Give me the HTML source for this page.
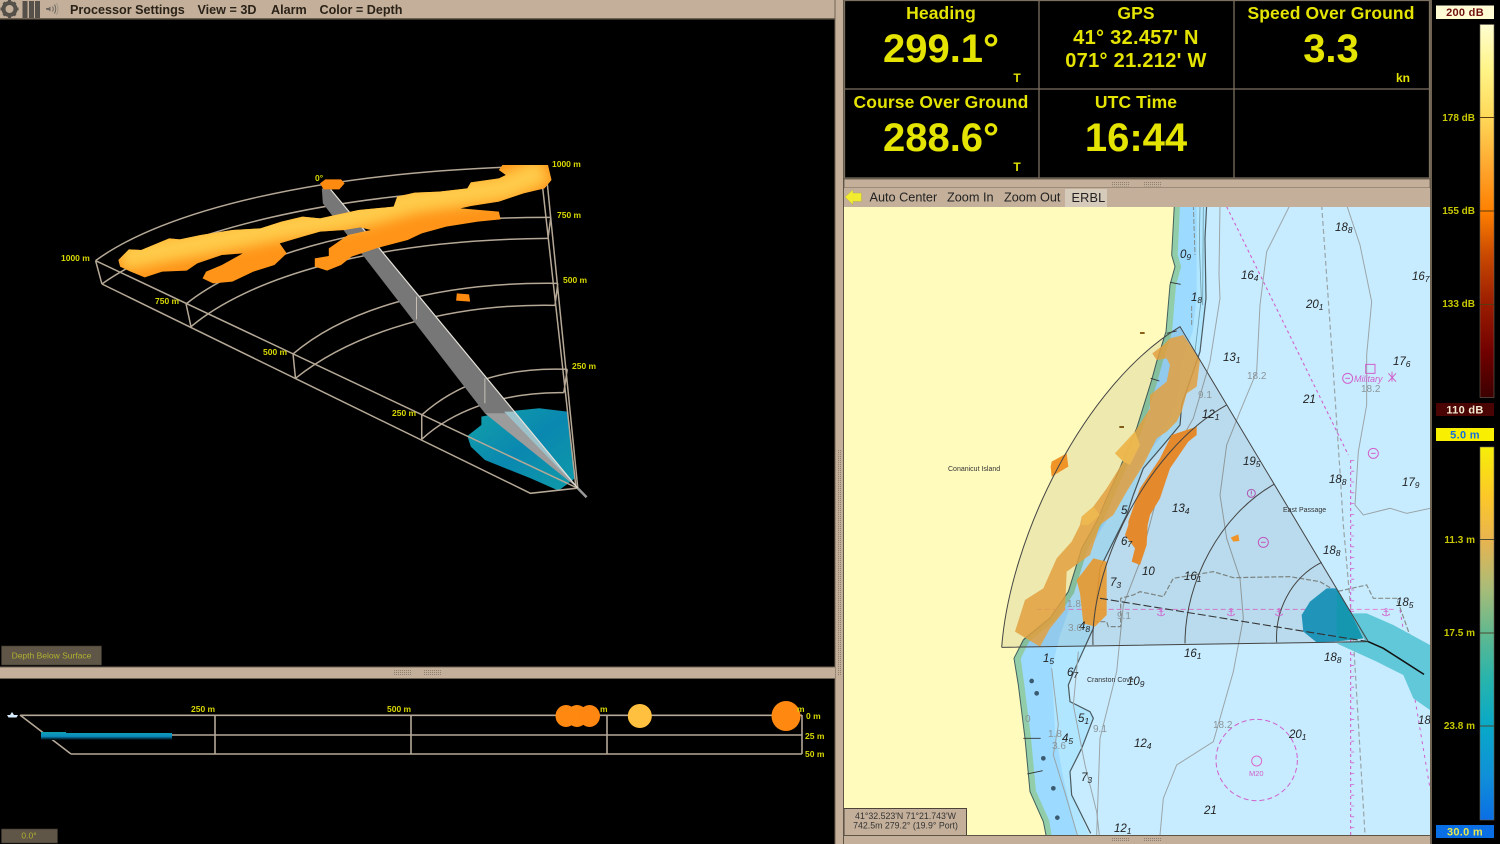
<!DOCTYPE html>
<html><head><meta charset="utf-8"><title>Sonar</title>
<style>
html,body{margin:0;padding:0;background:#000;width:1500px;height:844px;overflow:hidden}
svg{position:absolute;left:0;top:0;display:block;filter:blur(.25px)}
text{font-family:"Liberation Sans",sans-serif}
.y{fill:#e4e400;font-weight:bold;text-anchor:middle}
.h{font-size:17.500px;letter-spacing:.1px}
.b{font-size:40px}
.g{font-size:20px;letter-spacing:.3px}
.u{font-size:12px}
.m{font-size:12.700px;fill:#222}
.t{font-size:12.600px;font-weight:bold;fill:#2a2218}
.l{font-size:8.500px;font-weight:bold;fill:#d8d800}
.s{font-size:10px;font-weight:bold;fill:#c8c800;text-anchor:end}
.bx{font-size:11px;font-weight:bold;text-anchor:middle;letter-spacing:.3px}
.n{font-size:11.500px;font-style:italic;fill:#222}
.n tspan{font-size:8.500px}
.gr{font-size:10px;fill:#8a9498}
.nm{font-size:7px;fill:#333}
.fr{fill:none;stroke:#b5a896;stroke-width:1.500;vector-effect:non-scaling-stroke}
.ln{fill:none;vector-effect:non-scaling-stroke}
</style></head><body>
<svg width="1500" height="844" viewBox="0 0 1500 844" xmlns="http://www.w3.org/2000/svg">
<defs>
<clipPath id="mc"><rect x="844" y="207" width="586" height="628"/></clipPath>
<filter id="bl" x="-20%" y="-40%" width="140%" height="180%"><feGaussianBlur stdDeviation="18"/></filter>
<clipPath id="blob"><path d="M195,330L225,298L260,300L340,265L370,268L430,255L520,240L600,235L660,215L720,200L770,205L880,180L980,170L990,140L1040,128L1110,125L1190,115L1200,97L1280,85L1300,75L1280,60L1290,45L1420,45L1430,90L1410,115L1350,130L1280,155L1200,168L1170,175L1280,185L1285,208L1220,215L1130,230L1060,250L1020,270L930,295L860,320L830,345L790,362L755,350L755,325L795,318L795,295L850,255L915,240L885,232L840,240L770,245L720,260L655,280L675,310L640,345L580,365L520,395L465,400L435,385L445,365L490,345L550,310L490,315L420,340L390,362L320,365L270,382L230,365L200,350Z"/></clipPath>
<linearGradient id="g1" x1="0" y1="0" x2="0" y2="1"><stop offset="0" stop-color="#fffdd0"/><stop offset=".12" stop-color="#fff488"/><stop offset=".25" stop-color="#ffd858"/><stop offset=".4" stop-color="#ffa028"/><stop offset=".5" stop-color="#ff8000"/><stop offset=".62" stop-color="#c84800"/><stop offset=".75" stop-color="#9a1c00"/><stop offset=".88" stop-color="#700000"/><stop offset="1" stop-color="#3c0000"/></linearGradient>
<linearGradient id="g2" x1="0" y1="0" x2="0" y2="1"><stop offset="0" stop-color="#f6ee08"/><stop offset=".13" stop-color="#fcc828"/><stop offset=".25" stop-color="#e8b450"/><stop offset=".38" stop-color="#a8bc78"/><stop offset=".5" stop-color="#60b890"/><stop offset=".62" stop-color="#28b4ac"/><stop offset=".75" stop-color="#08a8c8"/><stop offset=".88" stop-color="#1090d8"/><stop offset="1" stop-color="#0a6ee4"/></linearGradient>
<linearGradient id="tb" x1="0" y1="0" x2="0" y2="1"><stop offset="0" stop-color="#10a0b0"/><stop offset=".55" stop-color="#0a8cc0"/><stop offset="1" stop-color="#000"/></linearGradient>
<linearGradient id="bb" x1="0" y1="0" x2="1" y2="1"><stop offset="0" stop-color="#12a0a8"/><stop offset=".5" stop-color="#0a88b0"/><stop offset="1" stop-color="#0f9aa8"/></linearGradient>
<pattern id="dots" width="2" height="2" patternUnits="userSpaceOnUse"><rect width="1" height="1" fill="#8d8070"/></pattern>
</defs>

<!-- frame -->
<rect width="1500" height="844" fill="#000"/>
<rect x="0" y="0" width="835" height="19" fill="#c4b09a"/>
<rect x="0" y="18" width="835" height="1.500" fill="#6e6252"/>
<rect x="835" y="0" width="9" height="844" fill="#c4b09a"/>
<rect x="843" y="0" width="1" height="844" fill="#5e5446"/>
<rect x="834.500" y="0" width="1" height="844" fill="#6e6252"/>
<rect x="838" y="450" width="3" height="225" fill="url(#dots)"/>
<rect x="0" y="667" width="835" height="12" fill="#c4b09a"/>
<rect x="0" y="666.500" width="835" height="1" fill="#6e6252"/>
<rect x="0" y="678" width="835" height="1" fill="#6e6252"/>
<rect x="393" y="670" width="18" height="5" fill="url(#dots)"/><rect x="424" y="670" width="18" height="5" fill="url(#dots)"/>
<rect x="1430" y="0" width="2" height="844" fill="#6e6252"/>

<!-- menu bar -->
<g fill="#55504a">
<circle cx="9.500" cy="9" r="6" fill="none" stroke="#55504a" stroke-width="4"/>
<path d="M8,0h3v3h-3zM8,15h3v3h-3zM0.500,7.500h3v3h-3zM15.500,7.500h3v3h-3zM2.500,3.500l2,-2l2.500,2.500l-2,2zM12,14l2,-2l2.500,2.500l-2,2zM2.500,14.500l2.500,-2.500l2,2l-2.500,2.500zM12,4l2.500,-2.500l2,2l-2.500,2.500z"/>
<rect x="22.500" y="1" width="5" height="17"/><rect x="29" y="1" width="5" height="17"/><rect x="35" y="1" width="5" height="17"/>
<path d="M46,8h2.500l2,-1.500v5l-2,-1.500h-2z" fill="#6a655e"/>
<path d="M52.500,6.500q1.500,2.500 0,5M54.500,4.500q2.500,4.500 0,9" fill="none" stroke="#6a655e" stroke-width="1"/>
<path d="M56.500,3q3,6 0,12" fill="none" stroke="#9a9084" stroke-width=".8"/>
</g>
<text x="70" y="14" class="t">Processor Settings</text>
<text x="197.500" y="14" class="t">View = 3D</text>
<text x="271" y="14" class="t">Alarm</text>
<text x="319.500" y="14" class="t">Color = Depth</text>

<!-- 3D view -->
<g transform="translate(50,150) scale(.3507,.3333)">
<path d="M1230,800L1300,785L1395,775L1475,785L1480,830L1497,985L1450,1022L1370,985L1240,930L1200,890L1190,858L1230,825Z" fill="url(#bb)"/>
<path class="fr" d="M130,332C320,185 760,62 1413,48"/>
<path class="fr" d="M148,402C350,250 800,120 1405,115"/>
<path class="fr" d="M388,462C520,350 850,200 1428,202"/>
<path class="fr" d="M402,530C560,390 900,270 1420,265"/>
<path class="fr" d="M693,612C840,480 1100,395 1448,400"/>
<path class="fr" d="M700,685C860,550 1130,460 1440,466"/>
<path class="fr" d="M1060,795C1150,710 1280,650 1475,658"/>
<path class="fr" d="M1060,868C1140,790 1280,725 1465,728"/>
<path class="fr" d="M130,332L1505,1015L1413,48M148,402L1370,1030L1500,1015L1405,115M130,332L148,402M388,462L402,530M693,612L700,685M1060,795L1060,868M1475,658L1465,728M1448,400L1440,466M1428,202L1420,265M1413,48L1405,115"/>
<path d="M775,115L800,118L1505,1015L1240,790L778,160Z" fill="#777"/>
<path d="M1295,785L1325,785L1505,1015Z" fill="#a8dce8" opacity=".75"/>
<path d="M1240,790L1300,790L1505,1015Z" fill="#fff" opacity=".28"/>
<path class="ln" d="M800,118L1505,1015" stroke="#e6e2da" stroke-width="1.200"/>
<path class="ln" d="M1045,440V508M1240,685V760" stroke="#c8c0b4" stroke-width="1"/>
<path d="M195,330L225,298L260,300L340,265L370,268L430,255L520,240L600,235L660,215L720,200L770,205L880,180L980,170L990,140L1040,128L1110,125L1190,115L1200,97L1280,85L1300,75L1280,60L1290,45L1420,45L1430,90L1410,115L1350,130L1280,155L1200,168L1170,175L1280,185L1285,208L1220,215L1130,230L1060,250L1020,270L930,295L860,320L830,345L790,362L755,350L755,325L795,318L795,295L850,255L915,240L885,232L840,240L770,245L720,260L655,280L675,310L640,345L580,365L520,395L465,400L435,385L445,365L490,345L550,310L490,315L420,340L390,362L320,365L270,382L230,365L200,350Z" fill="#ff9418"/>
<g clip-path="url(#blob)"><path d="M200,325L340,295L480,268L640,235L770,215L900,190L1040,150L1180,130L1300,110L1410,60" fill="none" stroke="#ffca48" stroke-width="78" filter="url(#bl)"/></g>
<path d="M770,100L785,88L830,88L840,100L825,118L780,118Z" fill="#ff8a10"/>
<path d="M1160,430L1195,433L1198,455L1158,452Z" fill="#ff8a10"/>
<path class="ln" d="M1505,1015L1530,1042" stroke="#999" stroke-width="2.500"/>
</g>
<g class="l">
<text x="61" y="261">1000 m</text><text x="315" y="181">0°</text><text x="552" y="167">1000 m</text>
<text x="557" y="218">750 m</text><text x="563" y="283">500 m</text><text x="572" y="369">250 m</text>
<text x="155" y="304">750 m</text><text x="263" y="355">500 m</text><text x="392" y="416">250 m</text>
</g>
<rect x="1.500" y="646" width="100" height="19" fill="#5f5648" stroke="#3a342a" stroke-width=".6"/>
<text x="51.500" y="658.500" font-size="8.500" fill="#b0b030" text-anchor="middle">Depth Below Surface</text>

<!-- profile -->
<path d="M20,715.300H802M43,735H802M71,754H802M215,715V754M411,715V754M607,715V754M802,715V754M20,715L71,754" fill="none" stroke="#b5a898" stroke-width="1.600"/>
<path d="M7,715h11l-1.500,2.500h-8zM10,715l2,-3l2,3z" fill="#d8ecff"/>
<path d="M41,732H66V733H172V740H41Z" fill="url(#tb)"/>
<ellipse cx="566" cy="716" rx="10.500" ry="11" fill="#ff8810"/><ellipse cx="577" cy="716" rx="10.500" ry="11" fill="#ff8810"/><ellipse cx="589.500" cy="716" rx="10.500" ry="11" fill="#ff8610"/>
<ellipse cx="639.800" cy="716" rx="12" ry="12" fill="#ffc040"/>
<ellipse cx="786" cy="716" rx="14.500" ry="15" fill="#ff8810"/>
<g class="l">
<text x="191" y="712">250 m</text><text x="387" y="712">500 m</text><text x="600" y="712">m</text><text x="797" y="712">m</text>
<text x="806" y="719">0 m</text><text x="805" y="739">25 m</text><text x="805" y="757">50 m</text>
</g>
<rect x="1.500" y="829" width="56" height="14" fill="#5f5648" stroke="#3a342a" stroke-width=".6"/>
<text x="29" y="838.500" font-size="8.500" fill="#b0b030" text-anchor="middle">0.0°</text>

<!-- instruments -->
<path d="M844.500,0V179M1039,0V178M1234,0V178M1429.500,0V179M844,0.500H1430M844,89H1430M844,178H1430" stroke="#7c7060" stroke-width="1.300" fill="none"/>
<text x="941" y="19" class="y h">Heading</text><text x="941" y="62" class="y b">299.1°</text><text x="1017" y="82" class="y u">T</text>
<text x="1136" y="19" class="y h">GPS</text><text x="1136" y="44" class="y g">41° 32.457' N</text><text x="1136" y="67" class="y g">071° 21.212' W</text>
<text x="1331" y="19" class="y h">Speed Over Ground</text><text x="1331" y="62" class="y b">3.3</text><text x="1403" y="82" class="y u">kn</text>
<text x="941" y="108" class="y h">Course Over Ground</text><text x="941" y="151" class="y b">288.6°</text><text x="1017" y="171" class="y u">T</text>
<text x="1136" y="108" class="y h">UTC Time</text><text x="1136" y="151" class="y b">16:44</text>
<rect x="844" y="179" width="586" height="9" fill="#c4b09a" stroke="#5e5446" stroke-width=".8"/>
<rect x="1112" y="181.500" width="18" height="5" fill="url(#dots)"/><rect x="1144" y="181.500" width="18" height="5" fill="url(#dots)"/>

<!-- toolbar -->
<rect x="844" y="188" width="586" height="19" fill="#c4b09a"/>
<path d="M845,197L853,189.500V193H861.500V201.500H853V205Z" fill="#f2ec30" stroke="#b0a858" stroke-width=".5"/>
<text x="869.500" y="201.500" class="m">Auto Center</text><text x="947" y="201.500" class="m">Zoom In</text><text x="1004" y="201.500" class="m">Zoom Out</text>
<rect x="1065" y="189" width="42" height="18" fill="#d6cabb"/>
<text x="1071.500" y="202" class="m" style="letter-spacing:.2px">ERBL</text>

<!-- map -->
<g clip-path="url(#mc)">
<rect x="844" y="207" width="586" height="628" fill="#fffbbd"/>
<g transform="translate(1000,205) scale(.33333)">
<path d="M523,0L515,150L525,185L510,240L498,380L470,470L455,525L410,670L355,800L320,880L290,950L245,1030L205,1160L150,1240L70,1305L42,1360L55,1440L75,1600L90,1760L130,1850L140,1900H1290V0Z" fill="#c8ecff"/>
<path d="M523,0L515,150L525,185L510,240L498,380L470,470L455,525L410,670L355,800L320,880L290,950L245,1030L205,1160L150,1240L70,1305L42,1360L55,1440L75,1600L90,1760L130,1850L140,1900H272L215,1770L210,1700L245,1630L280,1540L270,1520L210,1490L205,1440L230,1380L280,1270L300,1090L350,990L380,930L400,870L430,790L490,720L540,660L545,600L600,440L618,280L615,100L620,0Z" fill="#b0e6ff"/>
<path d="M523,0L515,150L525,185L510,240L498,380L470,470L455,525L410,670L355,800L320,880L290,950L245,1030L205,1160L150,1240L70,1305L42,1360L55,1440L75,1600L90,1760L130,1850L140,1900H232L190,1720L165,1580L155,1390L180,1290L205,1220L215,1140L270,1030L330,930L380,850L430,760L480,700L530,600L545,470L578,380L590,280L590,0Z" fill="#9cdaff"/>
<path class="ln" d="M531,0L524,150L534,185L519,240L507,380L479,470L464,525L419,670L364,800L329,880L299,950L254,1030L214,1160L159,1240L79,1305L53,1360L64,1440L84,1600L99,1760L139,1850L147,1900" stroke="#90cda8" stroke-width="6"/>
<path class="ln" d="M523,0L515,150L525,185L510,240L498,380L470,470L455,525L410,670L355,800L320,880L290,950L245,1030L205,1160L150,1240L70,1305L42,1360L55,1440L75,1600L90,1760L130,1850L140,1900" stroke="#44605a" stroke-width="1"/>
<path class="ln" d="M620,0L615,100L618,280L600,440L545,600L540,660L490,720L430,790L400,870L380,930L350,990L300,1090L280,1270L230,1380L205,1440L210,1490L270,1520L280,1540L245,1630L210,1700L215,1770L272,1885" stroke="#4a5a60" stroke-width="1.200"/>
<path class="ln" d="M600,0L598,120L604,280L585,440M610,0L608,300" stroke="#6f9ba8" stroke-width=".8"/>
<path class="ln" d="M510,232L542,238M500,385L530,378M452,520L478,528M70,1600H122M82,1707L128,1697" stroke="#333" stroke-width=".9"/>
<g fill="none" stroke="#9aa5a8" stroke-width="1">
<path class="ln" d="M660,0L657,210L660,280L630,470L580,640L540,710L470,880L420,1070L370,1200L350,1400L300,1600L290,1890"/>
<path class="ln" d="M870,0L800,140L780,300L770,500L720,620L680,720L660,870L680,1000L720,1120L730,1240L700,1400L640,1610L530,1680L490,1780L480,1890"/>
<path class="ln" d="M1040,0L1080,120L1115,290L1100,450L1100,600L1075,740L1065,900L1090,930L1170,910L1220,925L1290,910"/>
<path class="ln" d="M155,1390L175,1560L160,1650L200,1780L232,1890M235,1340L220,1500L255,1680L290,1820L298,1890"/>
</g>
<path class="ln" d="M965,0L1000,500L1020,800L1030,960L1060,1300L1095,1890" stroke="#98a4a6" stroke-width="1.200" stroke-dasharray="5 3"/>
<path class="ln" d="M280,1250H320L325,1265H362V1180L400,1170L420,1160L490,1175L520,1120L640,1100L700,1118L870,1115L960,1130L1010,1160L1100,1140L1120,1180L1190,1180L1240,1320L1280,1350" stroke="#858f8c" stroke-width="1.200" stroke-dasharray="5 2"/>
<path class="ln" d="M580,0L585,150M575,360V300" stroke="#858f8c" stroke-width="1" stroke-dasharray="5 2"/>
<path class="ln" d="M680,5L1045,750M1052,765V1890" stroke="#d060d0" stroke-width="1.100" stroke-dasharray="3 3"/>
<path class="ln" d="M1058,765V1890" stroke="#d060d0" stroke-width="3" stroke-dasharray=".8 10"/>
<path class="ln" d="M1200,1215L1290,1750" stroke="#d060d0" stroke-width="1" stroke-dasharray="3 4"/>
<path class="ln" d="M110,1213H1190" stroke="#e080d8" stroke-width="1" stroke-dasharray="5 3"/>
<circle cx="770" cy="1665" r="122" fill="none" stroke="#d060d0" stroke-width="1" stroke-dasharray="5 3" vector-effect="non-scaling-stroke"/>
<circle cx="770" cy="1668" r="15" fill="none" stroke="#d86cd0" stroke-width="1" vector-effect="non-scaling-stroke"/>
<circle cx="1120" cy="745" r="15" fill="none" stroke="#d060cc" stroke-width="1" vector-effect="non-scaling-stroke"/><path d="M1113,745H1127" stroke="#d060cc" stroke-width="3"/>
<circle cx="790" cy="1012" r="15" fill="none" stroke="#d060cc" stroke-width="1" vector-effect="non-scaling-stroke"/><path d="M783,1012H797" stroke="#d060cc" stroke-width="3"/>
<circle cx="1043" cy="520" r="15" fill="none" stroke="#d060cc" stroke-width="1" vector-effect="non-scaling-stroke"/><path d="M1036,520H1050" stroke="#d060cc" stroke-width="3"/>
<circle cx="754" cy="865" r="12" fill="none" stroke="#c060c0" stroke-width="1" vector-effect="non-scaling-stroke"/><path d="M754,857V868M754,871V873" stroke="#c060c0" stroke-width="3"/>
<rect x="1097" y="478" width="28" height="27" fill="none" stroke="#d060cc" stroke-width="1" vector-effect="non-scaling-stroke"/>
<path class="ln" d="M1165,505L1188,530M1188,505L1165,530M1176,500V530" stroke="#d060cc" stroke-width="1"/>
<g fill="#3a5a70"><circle cx="95" cy="1428" r="7"/><circle cx="110" cy="1465" r="7"/><circle cx="130" cy="1660" r="7"/><circle cx="160" cy="1750" r="7"/><circle cx="172" cy="1838" r="7"/></g>
<path d="M420,381h14v6h-14zM358,663h14v6h-14z" fill="#8a6418"/>
<!-- trail and echoes -->
<path d="M1050,1225L1100,1225L1180,1260L1290,1320V1515L1240,1480L1210,1410L1130,1370L1010,1315L1095,1305Z" fill="#60c8d8"/>
<!-- fan -->
<path d="M5,1327C30,1000 250,540 540,365L1105,1310Z" fill="#000" opacity=".07"/>
<path d="M457,445L490,420L510,400L550,390L600,465L590,545L560,565L545,620L530,650L500,680L470,700L430,780L380,860L340,930L300,960L270,1050L200,1100L195,1215L150,1270L120,1325L45,1280L75,1185L130,1150L170,1060L215,1010L240,960L245,935L280,905L320,850L370,770L345,745L405,680L450,610L450,570L500,530L510,480L500,460L470,465Z" fill="#e2a040" opacity=".85"/>
<path d="M345,745L405,680L420,720L390,780L370,770Z M245,935L280,905L300,930L265,960L245,960Z" fill="#f0bc50" opacity=".8"/>
<path d="M590,665L590,690L565,710L510,790L480,880L450,930L443,960L440,1020L420,1080L395,1070L405,1030L375,990L385,960L385,950L420,850L480,760L515,690Z" fill="#e58a2c"/>
<path d="M250,1100L280,1060L320,1070L320,1230L285,1265L250,1255L240,1165L230,1125Z" fill="#e8982c" opacity=".9"/>
<path d="M152,785L155,770L200,745L205,785L155,815Z" fill="#f09428"/>
<path d="M692,998L715,988L718,1008L700,1010Z" fill="#f09428"/>
<path d="M905,1230L930,1190L980,1150L1010,1150L1050,1220L1090,1300L1000,1310L950,1312L910,1280Z" fill="#2194ba"/>
<path d="M1010,1150L1050,1220L1090,1300L1010,1310Z" fill="#0e9aa8" opacity=".6"/>
<g fill="none" stroke="#444" stroke-width="1">
<path class="ln" d="M5,1327C30,1000 250,540 540,365L1105,1310L5,1327"/>
<path class="ln" d="M279,1320C270,1100 430,740 680,600"/>
<path class="ln" d="M555,1315C555,1130 660,930 822,838"/>
<path class="ln" d="M830,1312C825,1220 870,1120 965,1072"/>
</g>
<path class="ln" d="M300,1180L1105,1310" stroke="#333" stroke-width="1.100" stroke-dasharray="8 3"/>
<path class="ln" d="M1105,1310L1150,1330L1272,1408" stroke="#111" stroke-width="1.500"/>
</g>
<!-- soundings -->
<g class="n">
<text x="1180" y="258">0<tspan dy="2">9</tspan></text><text x="1191" y="301">1<tspan dy="2">8</tspan></text>
<text x="1241" y="279">16<tspan dy="2">4</tspan></text><text x="1335" y="231">18<tspan dy="2">8</tspan></text>
<text x="1412" y="280">16<tspan dy="2">7</tspan></text><text x="1306" y="308">20<tspan dy="2">1</tspan></text>
<text x="1223" y="361">13<tspan dy="2">1</tspan></text><text x="1393" y="365">17<tspan dy="2">6</tspan></text>
<text x="1303" y="403">21</text><text x="1202" y="418">12<tspan dy="2">1</tspan></text>
<text x="1243" y="465">19<tspan dy="2">5</tspan></text><text x="1172" y="512">13<tspan dy="2">4</tspan></text>
<text x="1329" y="483">18<tspan dy="2">8</tspan></text><text x="1402" y="486">17<tspan dy="2">9</tspan></text>
<text x="1323" y="554">18<tspan dy="2">8</tspan></text><text x="1142" y="575">10</text>
<text x="1184" y="580">16<tspan dy="2">1</tspan></text><text x="1110" y="586">7<tspan dy="2">3</tspan></text>
<text x="1396" y="606">18<tspan dy="2">5</tspan></text>
<text x="1324" y="661">18<tspan dy="2">8</tspan></text><text x="1184" y="657">16<tspan dy="2">1</tspan></text>
<text x="1043" y="662">1<tspan dy="2">5</tspan></text><text x="1067" y="676">6<tspan dy="2">7</tspan></text>
<text x="1127" y="685">10<tspan dy="2">9</tspan></text><text x="1078" y="722">5<tspan dy="2">1</tspan></text>
<text x="1062" y="742">4<tspan dy="2">5</tspan></text><text x="1134" y="747">12<tspan dy="2">4</tspan></text>
<text x="1289" y="738">20<tspan dy="2">1</tspan></text><text x="1081" y="781">7<tspan dy="2">3</tspan></text>
<text x="1204" y="814">21</text><text x="1114" y="832">12<tspan dy="2">1</tspan></text>
<text x="1079" y="630">4<tspan dy="2">8</tspan></text><text x="1418" y="724">18</text>
<text x="1121" y="514">5</text><text x="1121" y="545">6<tspan dy="2">7</tspan></text>
</g>
<g class="gr">
<text x="1247" y="379">18.2</text><text x="1198" y="398">9.1</text><text x="1361" y="392">18.2</text>
<text x="1117" y="619">9.1</text><text x="1068" y="631">3.6</text><text x="1093" y="732">9.1</text>
<text x="1048" y="737">1.8</text><text x="1052" y="749">3.6</text><text x="1213" y="728">18.2</text>
<text x="1067" y="607">1.8</text><text x="1025" y="722">0</text>
</g>
<text x="948" y="471" class="nm">Conanicut Island</text>
<text x="1283" y="512" class="nm">East Passage</text>
<text x="1087" y="682" class="nm">Cranston Cove</text>
<text x="1354" y="382" font-size="9" font-style="italic" fill="#d060cc">Military</text>
<text x="1249" y="776" font-size="7.500" fill="#d060cc">M20</text>
<g font-size="11" fill="#d060cc" text-anchor="middle">
<text x="1161" y="616" style="font-family:'DejaVu Sans',sans-serif">⚓</text><text x="1231" y="616" style="font-family:'DejaVu Sans',sans-serif">⚓</text><text x="1279" y="616" style="font-family:'DejaVu Sans',sans-serif">⚓</text><text x="1386" y="616" style="font-family:'DejaVu Sans',sans-serif">⚓</text>
</g>
<!-- info box -->
<rect x="844" y="808.500" width="122.500" height="27" fill="#c4b09a" stroke="#4c4438" stroke-width="1"/>
<text x="905.500" y="819" font-size="8.800" fill="#333" text-anchor="middle">41°32.523'N 71°21.743'W</text>
<text x="905.500" y="828.500" font-size="8.800" fill="#333" text-anchor="middle">742.5m  279.2° (19.9° Port)</text>
</g>
<rect x="844" y="835" width="586" height="9" fill="#c4b09a"/>
<rect x="844" y="835" width="586" height="1" fill="#5e5446"/>
<rect x="1112" y="837" width="18" height="5" fill="url(#dots)"/><rect x="1144" y="837" width="18" height="5" fill="url(#dots)"/>

<!-- scales -->
<rect x="1436" y="5.500" width="58" height="13.500" fill="#fffcd4"/>
<text x="1465" y="16" class="bx" fill="#701010">200 dB</text>
<rect x="1480" y="24.500" width="14" height="373" fill="url(#g1)" stroke="#6a6458" stroke-width=".6"/>
<path d="M1480,117.500h14M1480,211h14M1480,304.500h14" stroke="#5a3a10" stroke-width=".9"/>
<text x="1475" y="121" class="s">178 dB</text><text x="1475" y="214" class="s">155 dB</text><text x="1475" y="307" class="s">133 dB</text>
<rect x="1436" y="403" width="58" height="13" fill="#4a0404"/>
<text x="1465" y="413.500" class="bx" fill="#f4ecd0">110 dB</text>
<rect x="1436" y="428" width="58" height="13" fill="#f8f000"/>
<text x="1465" y="438.500" class="bx" fill="#1470d8">5.0 m</text>
<rect x="1480" y="447" width="14" height="373" fill="url(#g2)" stroke="#6a6458" stroke-width=".6"/>
<path d="M1480,539.500h14M1480,633h14M1480,726h14" stroke="#4a4a30" stroke-width=".9"/>
<text x="1475" y="543" class="s">11.3 m</text><text x="1475" y="636" class="s">17.5 m</text><text x="1475" y="729" class="s">23.8 m</text>
<rect x="1436" y="825" width="58" height="13" fill="#0a6ee4"/>
<text x="1465" y="835.500" class="bx" fill="#e8e850">30.0 m</text>
</svg>
</body></html>
